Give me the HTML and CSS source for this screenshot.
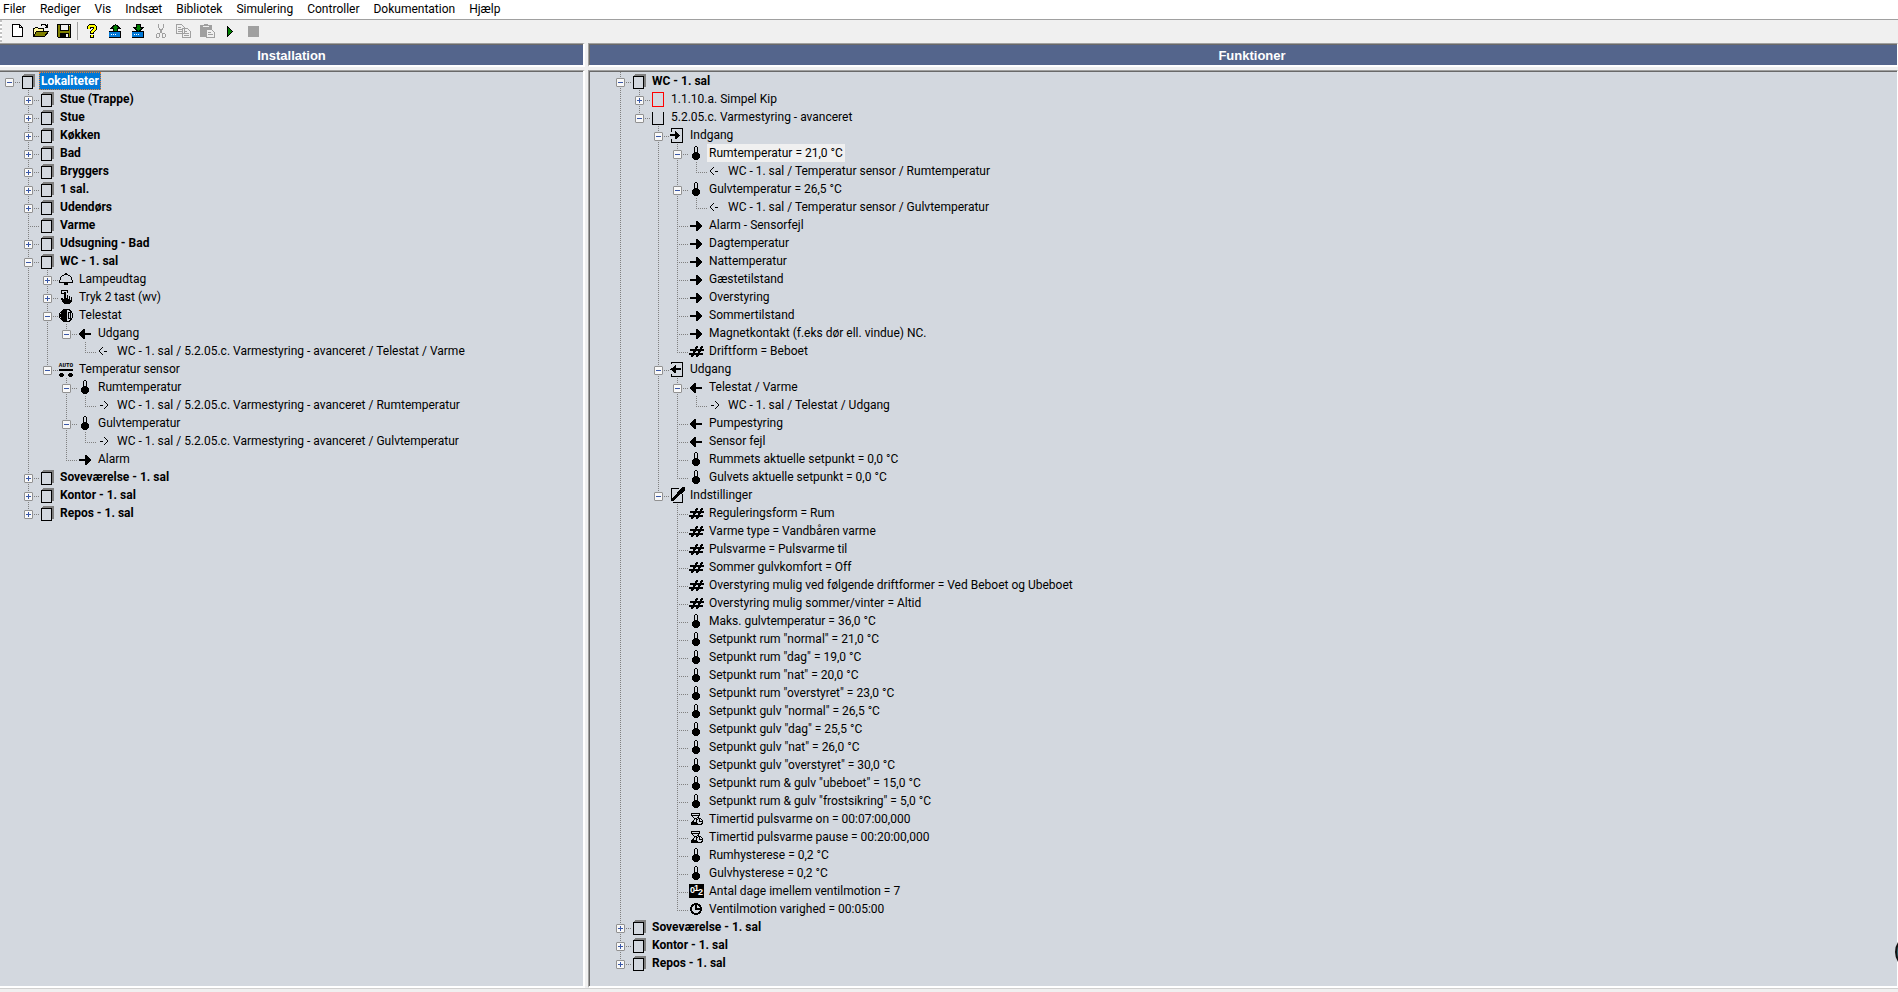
FILE: index.html
```html
<!DOCTYPE html>
<html lang="da">
<head>
    <meta charset="UTF-8">
    <meta name="viewport" content="width=device-width, initial-scale=1.0">
    <title>Installation</title>
    <link rel="stylesheet" href="styles.css">
</head>
<body>
    <!-- Icon sprite -->
    <svg class="sprite" aria-hidden="true">
        <symbol id="room" viewBox="0 0 16 16">
            <path fill="#808080" d="M4 1h11v13h-2V3H3V2h1z"/>
            <path fill="none" stroke="#000" d="M2.500 3.500h10v12h-10z"/>
        </symbol>
        <symbol id="block-red" viewBox="0 0 16 16"><path fill="none" stroke="#f00" d="M2.500 1.500h11v14h-11z"/></symbol>
        <symbol id="block" viewBox="0 0 16 16"><path fill="none" stroke="#000" d="M2.500 3v12.500h11V3"/></symbol>
        <symbol id="input" viewBox="0 0 16 16">
            <path fill="none" stroke="#000" d="M2.500 5V1.500h11v14h-11V12"/>
            <path d="M1 7h5V4h1v1h1v1h1v1h1v1h1v1h-1v1H9v1H8v1H6V9H1z"/>
        </symbol>
        <symbol id="output" viewBox="0 0 16 16">
            <path fill="none" stroke="#000" d="M2.500 3V1.500h11v14h-11V13"/>
            <path d="M12 7H7V4H6v1H5v1H4v1H2v1H1v1h2v1h1v1h1v1h2V9h5z"/>
        </symbol>
        <symbol id="settings" viewBox="0 0 16 16">
            <path fill="none" stroke="#000" d="M10 1.500H2.500v11M4 15.500h9.500V7"/>
            <path d="M15 0h1v3l-4 4-2 1-6 6H2v-2l6-6 1-2 4-4z"/>
        </symbol>
        <symbol id="arrow-right" viewBox="0 0 16 16"><path d="M2 8h6V4h2v1h1v1h1v1h1v1h1v2h-1v1h-1v1h-1v1h-1v1H8v-4H2z"/></symbol>
        <symbol id="arrow-left" viewBox="0 0 16 16"><path d="M14 8H8V4H6v1H5v1H4v1H3v1H2v2h1v1h1v1h1v1h1v1h2v-4h6z"/></symbol>
        <symbol id="link-left" viewBox="0 0 16 16"><path d="M6 4h1v1H6zM5 5h1v1H5zM4 6h1v1H4zM3 7h1v2H3zM4 9h1v1H4zM5 10h1v1H5zM6 11h1v1H6zM8 8h3v1H8z"/></symbol>
        <symbol id="link-right" viewBox="0 0 16 16"><path d="M8 4h1v1H8zM9 5h1v1H9zM10 6h1v1h-1zM11 7h1v2h-1zM10 9h1v1h-1zM9 10h1v1H9zM8 11h1v1H8zM4 8h3v1H4z"/></symbol>
        <symbol id="enum" viewBox="0 0 16 16">
            <path d="M2 6h14v2H2zM1 10h14v2H1z"/>
            <path d="M8 3h2v2H9v2H8v2H7v2H6v2H5v1H3v-2h1v-2h1V8h1V6h1V4h1zM13 3h2v2h-1v2h-1v2h-1v2h-1v2h-1v1H8v-2h1v-2h1V8h1V6h1V4h1z"/>
        </symbol>
        <symbol id="thermo" viewBox="0 0 16 16"><path fill-rule="evenodd" d="M7 1h2v1h1v6h1v1h1v4h-1v1h-1v1H6v-1H5v-1H4V9h1V8h1V2h1zM7 2v5h2V2z"/></symbol>
        <symbol id="lamp" viewBox="0 0 16 16">
            <path d="M7 2h2v1H7zM6 3h4v1h2v1h-2V4H6v1H4V4h2zM4 5v1H3V5zM12 5h1v1h-1zM2 6h1v3H2zM13 6h1v3h-1zM1 9h1v2h12V9h1v3H9v1H7v-1H1zM6 12h4v2H6z"/>
        </symbol>
        <symbol id="push" viewBox="0 0 16 16">
            <path d="M3 1h7v3H9V2H4v2h2v1H3zM6 3h2v6h1V6h1v4h1V7h1v4h1V8h1v5h-1v1h-1v1H6v-1H5v-1H4v-2H3V9h2v1h1z"/>
        </symbol>
        <symbol id="telestat" viewBox="0 0 16 16">
            <path fill="none" stroke="#000" d="M6 2.500h5l2 2 1.500 2v4l-1.500 2-2 2H6l-2-2-2.500-2v-4l2.500-2zM8.500 2v13M10.500 5.500h2v6h-2z"/>
            <path d="M1 8h1V7h1V6h1V5h1V4h1V3h2v11H6v-1H5v-1H4v-1H3v-1H2V9H1z"/>
        </symbol>
        <symbol id="auto" viewBox="0 0 16 16">
            <text x="8" y="6" text-anchor="middle" class="icon-text">AUTO</text>
            <path d="M1 8h14v2H1zM2 12h3v1h1v2H5v1H2v-1H1v-2h1zM11 12h3v1h1v2h-1v1h-3v-1h-1v-2h1z"/>
        </symbol>
        <symbol id="timer" viewBox="0 0 16 16">
            <path fill-rule="evenodd" d="M3 2h9v3h-1v2H9v1h2v1h1v5H3v-3h1v-1h1V9h1V7H5V6H4V5H3zM4 3v1h7V3zM5 5v1h1v1h3V6h1V5zM7 8v1H6v2h3V9H8V8z"/>
            <circle cx="11.500" cy="10.500" r="3" fill="#d3d8df" stroke="#000"/>
            <path d="M11 8h1v2h2v1h-3z"/>
        </symbol>
        <symbol id="counter" viewBox="0 0 16 16">
            <path d="M1 1h15v14H1z"/>
            <text x="2" y="10" class="icon-digit">0</text>
            <text x="6" y="8" class="icon-digit">1</text>
            <text x="10" y="12" class="icon-digit">2</text>
        </symbol>
        <symbol id="clock" viewBox="0 0 16 16">
            <circle cx="8" cy="8" r="5" fill="none" stroke="#000" stroke-width="2"/>
            <path d="M7 4h2v3h3v2H7z"/>
        </symbol>

        <symbol id="tb-new" viewBox="0 0 16 16"><path fill="#fff" stroke="#000" d="M2.500 1.500h7l3 3v9h-10zM9.500 1.500v3h3"/></symbol>
        <symbol id="tb-open" viewBox="0 0 16 16">
            <path fill="#fff7a0" stroke="#000" d="M.5 13.500v-8h1l1-1h2l1 1h5v3h-7z"/>
            <path fill="#808000" stroke="#000" d="M.5 13.500l3-5h12l-4 5z"/>
            <path fill="none" stroke="#000" d="M8 2.500l1-1h3l2 2M14.500 1v4M12 4.500h3"/>
        </symbol>
        <symbol id="tb-save" viewBox="0 0 16 16">
            <path fill="#808000" stroke="#000" d="M1.500 1.500h13v13h-12l-1-1z"/>
            <path fill="#f0f0f0" stroke="#000" d="M4 1.500h8v6H4z"/>
            <path d="M4 10h9v5H4z"/><path fill="#f0f0f0" d="M10 11h2v3h-2zM13 2h1v1h-1z"/>
        </symbol>
        <symbol id="tb-help" viewBox="0 0 16 16">
            <path fill="none" stroke="#000" stroke-width="4" d="M5 6V4l1-1h4l1 1v2L8 9v2M8 12v3"/>
            <path fill="none" stroke="#ff0" stroke-width="2" d="M5 6V4l1-1h4l1 1v2L8 9v1M8 12v2"/>
        </symbol>
        <symbol id="tb-up" viewBox="0 0 16 16">
            <path fill="#0078d7" d="M2 8h12v7H2z"/><path d="M2 8h12v1H2zM13 8h1v7h-1zM2 14h12v1H2z"/>
            <path fill="#fff" d="M4 11h1v1H4zM6 11h1v1H6zM8 11h1v1H8z"/>
            <path fill="#008000" stroke="#000" d="M6.500 8.500v-3h-3l5-4 5 4h-3v3z"/>
        </symbol>
        <symbol id="tb-down" viewBox="0 0 16 16">
            <path fill="#0078d7" d="M2 8h12v7H2z"/><path d="M2 8h12v1H2zM13 8h1v7h-1zM2 14h12v1H2z"/>
            <path fill="#fff" d="M4 11h1v1H4zM6 11h1v1H6zM8 11h1v1H8z"/>
            <path fill="#008000" stroke="#000" d="M6.500 1.500v3h-3l5 4 5-4h-3v-3z"/>
        </symbol>
        <symbol id="tb-cut" viewBox="0 0 16 16"><path fill="none" stroke="#a0a0a0" d="M5.500 1v3l3 5 1 2M10.500 1v3l-3 5-1 2M3.500 11.500l1-1h2v3l-1 1h-2zM9.500 10.500h2l1 1v2l-1 1h-2z"/></symbol>
        <symbol id="tb-copy" viewBox="0 0 16 16"><path fill="#f0f0f0" stroke="#a0a0a0" d="M.5 1.500h5l3 3v6h-8zM6.500 5.500h5l3 3v6h-8zM2 4.500h3M2 6.500h4M2 8.500h4M8 8.500h3M8 10.500h5M8 12.500h5"/></symbol>
        <symbol id="tb-paste" viewBox="0 0 16 16">
            <path fill="#a0a0a0" d="M1 2h4V1h4v1h4v12H1z"/><path fill="#f0f0f0" d="M4 3h6v1H4z"/>
            <path fill="#f0f0f0" stroke="#a0a0a0" d="M7.500 6.500h5l3 3v5h-8zM9 9.500h3M9 11.500h5"/>
        </symbol>
        <symbol id="tb-play" viewBox="0 0 16 16"><path fill="#008000" stroke="#000" d="M5.500 3.500v10l5-5z"/></symbol>
        <symbol id="tb-stop" viewBox="0 0 16 16"><path fill="#a0a0a0" d="M3 3h11v11H3z"/></symbol>
    </svg>

    <div class="app">
        <nav class="menubar">
            <button>Filer</button>
            <button>Rediger</button>
            <button>Vis</button>
            <button>Indsæt</button>
            <button>Bibliotek</button>
            <button>Simulering</button>
            <button>Controller</button>
            <button>Dokumentation</button>
            <button>Hjælp</button>
        </nav>

        <div class="toolbar">
            <span class="grip"></span>
            <button aria-label="Ny"><svg><use href="#tb-new"/></svg></button>
            <button aria-label="Åbn"><svg><use href="#tb-open"/></svg></button>
            <button aria-label="Gem"><svg><use href="#tb-save"/></svg></button>
            <span class="separator"></span>
            <button aria-label="Hjælp"><svg><use href="#tb-help"/></svg></button>
            <button aria-label="Hent"><svg><use href="#tb-up"/></svg></button>
            <button aria-label="Send"><svg><use href="#tb-down"/></svg></button>
            <button aria-label="Klip" disabled><svg><use href="#tb-cut"/></svg></button>
            <button aria-label="Kopier" disabled><svg><use href="#tb-copy"/></svg></button>
            <button aria-label="Indsæt" disabled><svg><use href="#tb-paste"/></svg></button>
            <button aria-label="Start"><svg><use href="#tb-play"/></svg></button>
            <button aria-label="Stop" disabled><svg><use href="#tb-stop"/></svg></button>
        </div>

        <main class="panes">
            <!-- Installation -->
            <section class="pane">
                <h2>Installation</h2>
                <div class="tree-box">
                    <ul class="tree root">
                        <li>
                            <div class="row bold"><button class="toggle open" aria-label="Fold"></button><svg><use href="#room"/></svg><span class="selected">Lokaliteter</span></div>
                            <ul>
                                <li><div class="row bold"><button class="toggle" aria-label="Fold"></button><svg><use href="#room"/></svg><span>Stue (Trappe)</span></div></li>
                                <li><div class="row bold"><button class="toggle" aria-label="Fold"></button><svg><use href="#room"/></svg><span>Stue</span></div></li>
                                <li><div class="row bold"><button class="toggle" aria-label="Fold"></button><svg><use href="#room"/></svg><span>Køkken</span></div></li>
                                <li><div class="row bold"><button class="toggle" aria-label="Fold"></button><svg><use href="#room"/></svg><span>Bad</span></div></li>
                                <li><div class="row bold"><button class="toggle" aria-label="Fold"></button><svg><use href="#room"/></svg><span>Bryggers</span></div></li>
                                <li><div class="row bold"><button class="toggle" aria-label="Fold"></button><svg><use href="#room"/></svg><span>1 sal.</span></div></li>
                                <li><div class="row bold"><button class="toggle" aria-label="Fold"></button><svg><use href="#room"/></svg><span>Udendørs</span></div></li>
                                <li><div class="row bold"><svg><use href="#room"/></svg><span>Varme</span></div></li>
                                <li><div class="row bold"><button class="toggle" aria-label="Fold"></button><svg><use href="#room"/></svg><span>Udsugning - Bad</span></div></li>
                                <li>
                                    <div class="row bold"><button class="toggle open" aria-label="Fold"></button><svg><use href="#room"/></svg><span>WC - 1. sal</span></div>
                                    <ul>
                                        <li><div class="row"><button class="toggle" aria-label="Fold"></button><svg><use href="#lamp"/></svg><span>Lampeudtag</span></div></li>
                                        <li><div class="row"><button class="toggle" aria-label="Fold"></button><svg><use href="#push"/></svg><span>Tryk 2 tast (wv)</span></div></li>
                                        <li>
                                            <div class="row"><button class="toggle open" aria-label="Fold"></button><svg><use href="#telestat"/></svg><span>Telestat</span></div>
                                            <ul>
                                                <li>
                                                    <div class="row"><button class="toggle open" aria-label="Fold"></button><svg><use href="#arrow-left"/></svg><span>Udgang</span></div>
                                                    <ul>
                                                        <li><div class="row"><svg><use href="#link-left"/></svg><span>WC - 1. sal / 5.2.05.c. Varmestyring - avanceret / Telestat / Varme</span></div></li>
                                                    </ul>
                                                </li>
                                            </ul>
                                        </li>
                                        <li>
                                            <div class="row"><button class="toggle open" aria-label="Fold"></button><svg><use href="#auto"/></svg><span>Temperatur sensor</span></div>
                                            <ul>
                                                <li>
                                                    <div class="row"><button class="toggle open" aria-label="Fold"></button><svg><use href="#thermo"/></svg><span>Rumtemperatur</span></div>
                                                    <ul>
                                                        <li><div class="row"><svg><use href="#link-right"/></svg><span>WC - 1. sal / 5.2.05.c. Varmestyring - avanceret / Rumtemperatur</span></div></li>
                                                    </ul>
                                                </li>
                                                <li>
                                                    <div class="row"><button class="toggle open" aria-label="Fold"></button><svg><use href="#thermo"/></svg><span>Gulvtemperatur</span></div>
                                                    <ul>
                                                        <li><div class="row"><svg><use href="#link-right"/></svg><span>WC - 1. sal / 5.2.05.c. Varmestyring - avanceret / Gulvtemperatur</span></div></li>
                                                    </ul>
                                                </li>
                                                <li><div class="row"><svg><use href="#arrow-right"/></svg><span>Alarm</span></div></li>
                                            </ul>
                                        </li>
                                    </ul>
                                </li>
                                <li><div class="row bold"><button class="toggle" aria-label="Fold"></button><svg><use href="#room"/></svg><span>Soveværelse - 1. sal</span></div></li>
                                <li><div class="row bold"><button class="toggle" aria-label="Fold"></button><svg><use href="#room"/></svg><span>Kontor - 1. sal</span></div></li>
                                <li><div class="row bold"><button class="toggle" aria-label="Fold"></button><svg><use href="#room"/></svg><span>Repos - 1. sal</span></div></li>
                            </ul>
                        </li>
                    </ul>
                </div>
            </section>

            <!-- Funktioner -->
            <section class="pane functions">
                <h2>Funktioner</h2>
                <div class="tree-box">
                    <ul class="tree">
                        <li>
                            <div class="row bold"><button class="toggle open" aria-label="Fold"></button><svg><use href="#room"/></svg><span>WC - 1. sal</span></div>
                            <ul>
                                <li><div class="row"><button class="toggle" aria-label="Fold"></button><svg><use href="#block-red"/></svg><span>1.1.10.a. Simpel Kip</span></div></li>
                                <li>
                                    <div class="row"><button class="toggle open" aria-label="Fold"></button><svg><use href="#block"/></svg><span>5.2.05.c. Varmestyring - avanceret</span></div>
                                    <ul>
                                        <li>
                                            <div class="row"><button class="toggle open" aria-label="Fold"></button><svg><use href="#input"/></svg><span>Indgang</span></div>
                                            <ul>
                                                <li>
                                                    <div class="row"><button class="toggle open" aria-label="Fold"></button><svg><use href="#thermo"/></svg><span class="inactive">Rumtemperatur = 21,0 °C</span></div>
                                                    <ul>
                                                        <li><div class="row"><svg><use href="#link-left"/></svg><span>WC - 1. sal / Temperatur sensor / Rumtemperatur</span></div></li>
                                                    </ul>
                                                </li>
                                                <li>
                                                    <div class="row"><button class="toggle open" aria-label="Fold"></button><svg><use href="#thermo"/></svg><span>Gulvtemperatur = 26,5 °C</span></div>
                                                    <ul>
                                                        <li><div class="row"><svg><use href="#link-left"/></svg><span>WC - 1. sal / Temperatur sensor / Gulvtemperatur</span></div></li>
                                                    </ul>
                                                </li>
                                                <li><div class="row"><svg><use href="#arrow-right"/></svg><span>Alarm - Sensorfejl</span></div></li>
                                                <li><div class="row"><svg><use href="#arrow-right"/></svg><span>Dagtemperatur</span></div></li>
                                                <li><div class="row"><svg><use href="#arrow-right"/></svg><span>Nattemperatur</span></div></li>
                                                <li><div class="row"><svg><use href="#arrow-right"/></svg><span>Gæstetilstand</span></div></li>
                                                <li><div class="row"><svg><use href="#arrow-right"/></svg><span>Overstyring</span></div></li>
                                                <li><div class="row"><svg><use href="#arrow-right"/></svg><span>Sommertilstand</span></div></li>
                                                <li><div class="row"><svg><use href="#arrow-right"/></svg><span>Magnetkontakt (f.eks dør ell. vindue) NC.</span></div></li>
                                                <li><div class="row"><svg><use href="#enum"/></svg><span>Driftform = Beboet</span></div></li>
                                            </ul>
                                        </li>
                                        <li>
                                            <div class="row"><button class="toggle open" aria-label="Fold"></button><svg><use href="#output"/></svg><span>Udgang</span></div>
                                            <ul>
                                                <li>
                                                    <div class="row"><button class="toggle open" aria-label="Fold"></button><svg><use href="#arrow-left"/></svg><span>Telestat / Varme</span></div>
                                                    <ul>
                                                        <li><div class="row"><svg><use href="#link-right"/></svg><span>WC - 1. sal / Telestat / Udgang</span></div></li>
                                                    </ul>
                                                </li>
                                                <li><div class="row"><svg><use href="#arrow-left"/></svg><span>Pumpestyring</span></div></li>
                                                <li><div class="row"><svg><use href="#arrow-left"/></svg><span>Sensor fejl</span></div></li>
                                                <li><div class="row"><svg><use href="#thermo"/></svg><span>Rummets aktuelle setpunkt = 0,0 °C</span></div></li>
                                                <li><div class="row"><svg><use href="#thermo"/></svg><span>Gulvets aktuelle setpunkt = 0,0 °C</span></div></li>
                                            </ul>
                                        </li>
                                        <li>
                                            <div class="row"><button class="toggle open" aria-label="Fold"></button><svg><use href="#settings"/></svg><span>Indstillinger</span></div>
                                            <ul>
                                                <li><div class="row"><svg><use href="#enum"/></svg><span>Reguleringsform = Rum</span></div></li>
                                                <li><div class="row"><svg><use href="#enum"/></svg><span>Varme type = Vandbåren varme</span></div></li>
                                                <li><div class="row"><svg><use href="#enum"/></svg><span>Pulsvarme = Pulsvarme til</span></div></li>
                                                <li><div class="row"><svg><use href="#enum"/></svg><span>Sommer gulvkomfort = Off</span></div></li>
                                                <li><div class="row"><svg><use href="#enum"/></svg><span>Overstyring mulig ved følgende driftformer = Ved Beboet og Ubeboet</span></div></li>
                                                <li><div class="row"><svg><use href="#enum"/></svg><span>Overstyring mulig sommer/vinter = Altid</span></div></li>
                                                <li><div class="row"><svg><use href="#thermo"/></svg><span>Maks. gulvtemperatur = 36,0 °C</span></div></li>
                                                <li><div class="row"><svg><use href="#thermo"/></svg><span>Setpunkt rum "normal" = 21,0 °C</span></div></li>
                                                <li><div class="row"><svg><use href="#thermo"/></svg><span>Setpunkt rum "dag" = 19,0 °C</span></div></li>
                                                <li><div class="row"><svg><use href="#thermo"/></svg><span>Setpunkt rum "nat" = 20,0 °C</span></div></li>
                                                <li><div class="row"><svg><use href="#thermo"/></svg><span>Setpunkt rum "overstyret" = 23,0 °C</span></div></li>
                                                <li><div class="row"><svg><use href="#thermo"/></svg><span>Setpunkt gulv "normal" = 26,5 °C</span></div></li>
                                                <li><div class="row"><svg><use href="#thermo"/></svg><span>Setpunkt gulv "dag" = 25,5 °C</span></div></li>
                                                <li><div class="row"><svg><use href="#thermo"/></svg><span>Setpunkt gulv "nat" = 26,0 °C</span></div></li>
                                                <li><div class="row"><svg><use href="#thermo"/></svg><span>Setpunkt gulv "overstyret" = 30,0 °C</span></div></li>
                                                <li><div class="row"><svg><use href="#thermo"/></svg><span>Setpunkt rum &amp; gulv "ubeboet" = 15,0 °C</span></div></li>
                                                <li><div class="row"><svg><use href="#thermo"/></svg><span>Setpunkt rum &amp; gulv "frostsikring" = 5,0 °C</span></div></li>
                                                <li><div class="row"><svg><use href="#timer"/></svg><span>Timertid pulsvarme on = 00:07:00,000</span></div></li>
                                                <li><div class="row"><svg><use href="#timer"/></svg><span>Timertid pulsvarme pause = 00:20:00,000</span></div></li>
                                                <li><div class="row"><svg><use href="#thermo"/></svg><span>Rumhysterese = 0,2 °C</span></div></li>
                                                <li><div class="row"><svg><use href="#thermo"/></svg><span>Gulvhysterese = 0,2 °C</span></div></li>
                                                <li><div class="row"><svg><use href="#counter"/></svg><span>Antal dage imellem ventilmotion = 7</span></div></li>
                                                <li><div class="row"><svg><use href="#clock"/></svg><span>Ventilmotion varighed = 00:05:00</span></div></li>
                                            </ul>
                                        </li>
                                    </ul>
                                </li>
                            </ul>
                        </li>
                        <li><div class="row bold"><button class="toggle" aria-label="Fold"></button><svg><use href="#room"/></svg><span>Soveværelse - 1. sal</span></div></li>
                        <li><div class="row bold"><button class="toggle" aria-label="Fold"></button><svg><use href="#room"/></svg><span>Kontor - 1. sal</span></div></li>
                        <li><div class="row bold"><button class="toggle" aria-label="Fold"></button><svg><use href="#room"/></svg><span>Repos - 1. sal</span></div></li>
                    </ul>
                </div>
            </section>
        </main>

        <footer class="statusbar"></footer>
        <div class="edge-badge"></div>
    </div>

    <script>
        document.querySelectorAll('.toggle').forEach((button) => {
            button.addEventListener('click', () => {
                const list = button.closest('li').querySelector('ul');
                if (!list) return;
                button.classList.toggle('open');
                list.hidden = !list.hidden;
            });
        });
    </script>
</body>
</html>
```
FILE: styles.css
```css
* {
    margin: 0;
    padding: 0;
    box-sizing: border-box;
}

body {
    font-family: Roboto, "Open Sans", sans-serif;
    font-size: 12px;
    line-height: 18px;
    color: #000;
    background: #f0f0f0;
}

button {
    font: inherit;
    color: inherit;
    background: none;
    border: none;
}

ul {
    list-style: none;
}

svg {
    display: block;
    width: 16px;
    height: 16px;
    shape-rendering: crispEdges;
}

.sprite {
    display: none;
}

.icon-text {
    font: bold 6px "Liberation Mono", monospace;
}

.icon-digit {
    font: bold 9px "Liberation Sans", sans-serif;
    fill: #fff;
}

.app {
    position: relative;
    display: flex;
    flex-direction: column;
    height: 100vh;
    overflow: hidden;
}

/* Menu and toolbar */
.menubar {
    display: flex;
    align-items: center;
    gap: 14px;
    height: 19px;
    padding-left: 3px;
    padding-bottom: 1px;
    background: #fff;
}

.toolbar {
    display: flex;
    align-items: center;
    height: 24px;
    padding-bottom: 1px;
    border-top: 1px solid #a0a0a0;
}

.toolbar button {
    display: flex;
    justify-content: center;
    width: 23px;
}

.grip {
    width: 2px;
    height: 22px;
    margin-right: 4px;
    background: repeating-linear-gradient(#c0c0c0 0 2px, #fff 2px 4px);
}

.separator {
    width: 1px;
    height: 18px;
    margin: 0 2px;
    background: #a0a0a0;
}

/* Panes */
.panes {
    display: grid;
    grid-template-columns: 585px 1fr;
    column-gap: 3px;
    flex: 1;
    min-height: 0;
}

.pane {
    display: flex;
    flex-direction: column;
    gap: 3px;
    min-width: 0;
    min-height: 0;
}

.pane h2,
.tree-box {
    border-top: 1px solid #a0a0a0;
    border-right: 2px solid #fff;
    border-bottom: 2px solid #fff;
    box-shadow: inset 0 1px #696969;
}

.pane h2 {
    height: 24px;
    font: bold 13px/23px "Liberation Sans", sans-serif;
    text-align: center;
    color: #fff;
    background: #54658c;
}

.tree-box {
    flex: 1;
    min-height: 0;
    padding-top: 1px;
    overflow: hidden;
    background: #d3d8df;
}

.functions h2,
.functions .tree-box {
    border-left: 1px solid #a0a0a0;
    border-right-width: 1px;
    box-shadow: inset 1px 1px #696969;
}

.functions h2 {
    padding-left: 18px;
}

.functions .tree-box {
    padding-left: 22px;
}

/* Tree */
.tree ul {
    padding-left: 19px;
}

.tree li {
    position: relative;
}

.tree li::before {
    content: "";
    position: absolute;
    top: 0;
    bottom: 0;
    left: 9px;
    width: 1px;
    background: repeating-linear-gradient(#808080 0 1px, transparent 1px 2px);
}

.tree li:last-child::before {
    bottom: auto;
    height: 11px;
}

.root > li::before {
    display: none;
}

.row {
    position: relative;
    display: flex;
    align-items: center;
    gap: 3px;
    height: 18px;
    padding-left: 20px;
    white-space: nowrap;
}

.row::before {
    content: "";
    position: absolute;
    top: 10px;
    left: 9px;
    width: 11px;
    height: 1px;
    background: repeating-linear-gradient(90deg, #808080 0 1px, transparent 1px 2px);
}

.row span {
    padding: 0 2px;
}

.bold {
    font-weight: bold;
}

.row .selected {
    color: #fff;
    background: #0078d7;
    outline: 1px dotted #f08030;
    outline-offset: -1px;
}

.row .inactive {
    background: #f0f0f0;
}

.toggle {
    position: absolute;
    top: 6px;
    left: 5px;
    width: 9px;
    height: 9px;
    border: 1px solid #919191;
    border-radius: 1px;
    background:
        linear-gradient(#3a58a8, #3a58a8) center / 5px 1px no-repeat,
        linear-gradient(#3a58a8, #3a58a8) center / 1px 5px no-repeat,
        #f8f8f8;
}

.toggle.open {
    background:
        linear-gradient(#3a58a8, #3a58a8) center / 5px 1px no-repeat,
        #f8f8f8;
}

.statusbar {
    height: 4px;
    border-top: 1px solid #d0d0d0;
}

/* Round handle that peeks in over the right edge */
.edge-badge {
    position: absolute;
    right: -33px;
    bottom: 22px;
    width: 36px;
    height: 36px;
    border: 2px solid #111;
    border-radius: 50%;
    background: #2f6670;
}
```
